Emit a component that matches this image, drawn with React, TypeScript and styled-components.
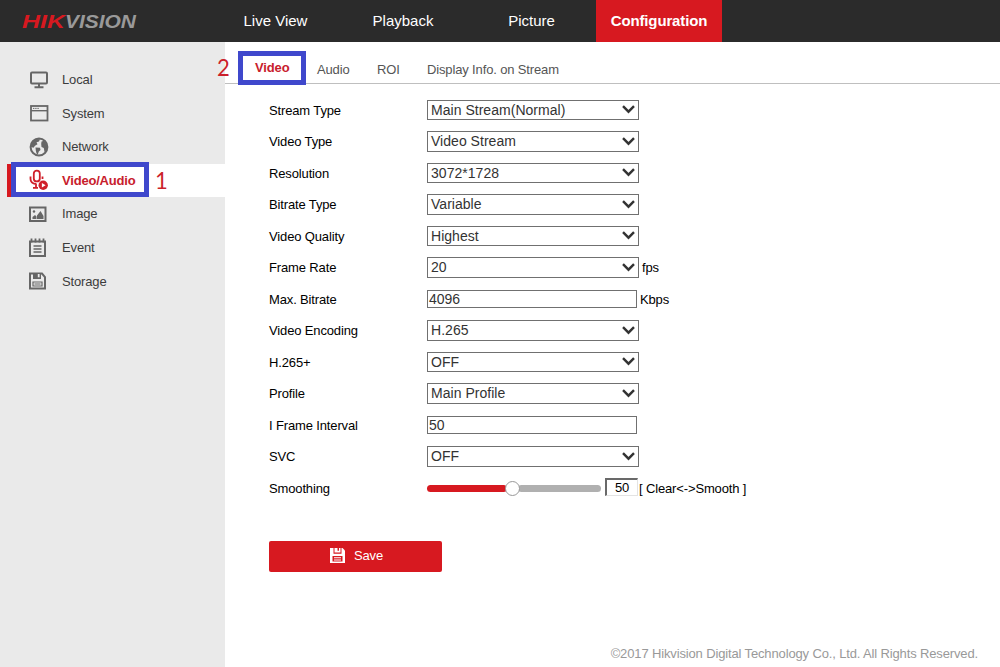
import React, { FunctionComponent, ReactNode } from 'react';
import styled, { createGlobalStyle } from 'styled-components';

type FieldProps = {
  label: string;
  value: string;
  kind?: 'select' | 'input';
  unit?: string;
};

const GlobalStyle = createGlobalStyle`
  * {
    box-sizing: border-box;
  }

  body {
    margin: 0;
    background: #fff;
    font-family: 'Liberation Sans', Arial, sans-serif;
    font-size: 13px;
    letter-spacing: -0.14px;
    color: #000;
  }
`;

const Page = styled.div`
  display: flex;
  flex-direction: column;
  width: 1000px;
  height: 667px;
  overflow: hidden;
  white-space: nowrap;
`;

const Header = styled.header`
  display: flex;
  flex: none;
  height: 42px;
  background: #2b2b2b;
`;

const LogoArea = styled.div`
  width: 212px;
  padding: 12px 0 0 20px;
  letter-spacing: 0;
`;

const MainNav = styled.nav`
  display: flex;
`;

const NavItem = styled.a<{ $width: number; $active?: boolean }>`
  display: flex;
  justify-content: center;
  width: ${p => p.$width}px;
  line-height: 41px;
  font-size: 15px;
  letter-spacing: ${p => (p.$active ? '-0.14px' : 0)};
  color: #fff;
  font-weight: ${p => (p.$active ? 'bold' : 'normal')};
  background: ${p => (p.$active ? '#d71920' : 'transparent')};
`;

const Body = styled.div`
  display: flex;
  flex: 1;
  min-height: 0;
`;

const Sidebar = styled.aside`
  width: 225px;
  padding-top: 21px;
  background: #eaeaea;
`;

const SideItem = styled.a<{ $active?: boolean }>`
  position: relative;
  display: flex;
  align-items: center;
  height: 33.55px;
  margin-left: 7px;
  padding-left: 20px;
  border-left: 1px solid ${p => (p.$active ? '#d71920' : 'transparent')};
  box-shadow: ${p => (p.$active ? 'inset 5px 0 #d71920' : 'none')};
  background: ${p => (p.$active ? '#fff' : 'transparent')};
  color: ${p => (p.$active ? '#c8202c' : '#3c3c3c')};
  font-weight: ${p => (p.$active ? 'bold' : 'normal')};
  letter-spacing: ${p => (p.$active ? -0.2 : -0.14)}px;

  svg {
    flex: none;
    margin-right: 12px;
  }
`;

const Content = styled.main`
  display: flex;
  flex: 1;
  flex-direction: column;
`;

const Tabs = styled.div`
  display: flex;
  flex: none;
  height: 42px;
  padding-left: 13px;
  border-bottom: 1px solid #bfbfbf;
  color: #555;
`;

const Tab = styled.a<{ $width: number; $active?: boolean }>`
  position: relative;
  width: ${p => p.$width}px;
  padding-left: ${p => (p.$active ? 17 : 0)}px;
  line-height: ${p => (p.$active ? 52 : 56)}px;
  font-weight: ${p => (p.$active ? 'bold' : 'normal')};
  color: ${p => (p.$active ? '#c8202c' : 'inherit')};
`;

const Highlight = styled.span<{ $left: number; $top: number; $width: number; $height: number }>`
  position: absolute;
  left: ${p => p.$left}px;
  top: ${p => p.$top}px;
  width: ${p => p.$width}px;
  height: ${p => p.$height}px;
  border: 5px solid #3f48cc;
`;

const StepNumber = styled.span<{ $left: number; $top: number }>`
  position: absolute;
  left: ${p => p.$left}px;
  top: ${p => p.$top}px;
  font: 24px/24px Lato, 'Open Sans', sans-serif;
  color: #cc1f2b;
  transform: scaleX(0.92);
  transform-origin: left;
`;

const Form = styled.form`
  display: flex;
  flex-direction: column;
  padding: 10.25px 0 0 44px;
`;

const Row = styled.div`
  display: flex;
  align-items: center;
  height: 31.5px;
`;

const Label = styled.label`
  width: 158px;
`;

const SelectBox = styled.div`
  display: flex;
  align-items: center;
  justify-content: space-between;
  width: 212px;
  height: 20.5px;
  padding: 0 3px 0.8px;
  border: 1px solid #707070;
  font-size: 14px;
  letter-spacing: 0.03px;
  color: #333;
`;

const InputBox = styled.div`
  width: 210px;
  height: 18px;
  padding-left: 1px;
  border: 1px solid #707070;
  font-size: 14px;
  line-height: 17px;
  letter-spacing: 0;
  color: #333;
`;

const Unit = styled.span`
  margin-left: 3px;
`;

const Slider = styled.div`
  display: flex;
  align-items: center;
  width: 174px;
  height: 16px;
`;

const Track = styled.span<{ $color: string; $width?: number }>`
  flex: ${p => (p.$width ? `0 0 ${p.$width}px` : 1)};
  height: 7px;
  border-radius: 4px;
  background: ${p => p.$color};
`;

const Knob = styled.span`
  width: 15px;
  height: 15px;
  margin: 0 -2px;
  border: 1px solid #999;
  border-radius: 50%;
  background: #fff;
  z-index: 1;
`;

const SliderValue = styled.div`
  width: 33px;
  height: 18px;
  margin: -2px 1px 0 4px;
  border: 1px solid #e3e3e3;
  border-top: 2px solid #696969;
  border-left: 2px solid #696969;
  line-height: 16px;
  text-align: center;
`;

const SaveButton = styled.button`
  display: flex;
  align-items: center;
  gap: 9px;
  width: 173px;
  height: 31px;
  margin-top: 37.25px;
  padding: 0 0 2px 61px;
  border: 0;
  border-radius: 2px;
  background: #d71920;
  color: #fff;
  font: inherit;
  letter-spacing: inherit;
`;

const Footer = styled.footer`
  margin-top: auto;
  padding: 0 22px 6px 0;
  text-align: right;
  color: #999;
`;

const Logo = () => (
  <svg width="120" height="20" fontFamily="Liberation Sans, sans-serif" fontSize="19" fontStyle="italic" fontWeight="bold">
    <text x="2" y="16" textLength="43" lengthAdjust="spacingAndGlyphs" fill="#d71920">
      HIK
    </text>
    <text x="45" y="16" textLength="71" lengthAdjust="spacingAndGlyphs" fill="#999">
      VISION
    </text>
  </svg>
);

const SideIcon: FunctionComponent<{ children: ReactNode; shift?: number }> = ({ children, shift = 0 }) => (
  <svg width="22" height="22" viewBox={`${shift} 0 22 22`} fill="none" stroke="#666" strokeWidth="2">
    {children}
  </svg>
);

const LocalIcon = () => (
  <SideIcon>
    <rect x="3" y="3.5" width="16" height="11" rx="1" />
    <path d="M11 15v3M6.5 18.2h9" />
  </SideIcon>
);

const SystemIcon = () => (
  <SideIcon>
    <rect x="3" y="4" width="16.5" height="14.5" strokeWidth="1.8" />
    <path d="M3 8.7h16.5" strokeWidth="1.4" />
    <path d="M5 6.4h6" strokeWidth="1" strokeDasharray="1.4 .8" />
  </SideIcon>
);

const NetworkIcon = () => (
  <SideIcon shift={1}>
    <circle cx="12" cy="11" r="8.4" />
    <path
      d="M4 11l.5-5 4.5-3 4 .3-1 2.2-2.500.7 1 2-2.5 1.5-1.5 2zM8.5 11.5l4.5.2.5 2.3-1.700 1.500-1 3-1.3-1-.7-3zM14.5 5.500l2.500-.8 3 4v5l-2.500 2.300-.7-4-2.300-1-.3-3z"
      fill="#666"
      stroke="none"
    />
  </SideIcon>
);

const VideoAudioIcon = () => (
  <svg width="22" height="22" viewBox="1 0 22 22" fill="none" stroke="#d0202a" strokeWidth="1.8">
    <rect x="6.8" y="1.6" width="6" height="10.8" rx="3" />
    <path d="M3.5 7.5v2.2c0 3.2 2.2 5 5.5 5.3M15.5 7.5V10M9 14.5V19M6 18.8h5" />
    <circle cx="16.2" cy="16.2" r="4.7" fill="#d0202a" stroke="none" />
    <path d="M14.9 13.9l3.7 2.3-3.7 2.3z" fill="#fff" stroke="none" />
  </svg>
);

const ImageIcon = () => (
  <SideIcon shift={1}>
    <rect x="3" y="4.5" width="15.5" height="13.5" />
    <path d="M5.5 16v-2L8 12l1.5 1.5V16zM10 16v-3.5L13.5 8l3 5v3z" fill="#666" stroke="none" />
    <circle cx="7" cy="8.5" r="1.2" fill="#666" stroke="none" />
  </SideIcon>
);

const EventIcon = () => (
  <SideIcon shift={1}>
    <path d="M3 4.5h15V19H3z" />
    <path d="M4.5 1.5v4M8.5 1.5v4M12.5 1.5v4M16.5 1.5v4" strokeWidth="1.8" />
    <path d="M6.5 9h8M6.5 12h8M6.5 15h8" strokeWidth="1.3" />
  </SideIcon>
);

const StorageIcon = () => (
  <SideIcon shift={1}>
    <path d="M3 3.5h12L18 7v11.5H3z" />
    <path d="M6 3h8v6H6z" fill="#666" stroke="none" />
    <path d="M10.8 4h1.8v3.3h-1.8z" fill="#eaeaea" stroke="none" />
    <path d="M6 12h9v4H6zM7.5 14h6" strokeWidth="1.2" />
  </SideIcon>
);

const SaveIcon = () => (
  <svg width="15" height="15" viewBox="0 0 15 15">
    <path d="M0 0h12.5L15 2.5V15H0z" fill="#fff" />
    <path d="M3.5 0h1v4.5h6V0h1v5.7h-8zM7.5 0H9v2.8H7.5zM2.5 8h10v5.5h-10z" fill="#d71920" />
    <path d="M4 9.3h7v1H4zM4 11.5h7v1H4z" fill="#fff" />
  </svg>
);

const Chevron = () => (
  <svg width="13" height="9" viewBox="0 0 13 9" fill="none" stroke="#333" strokeWidth="2.4">
    <path d="M1 1.2l5.5 5.5L12 1.2" />
  </svg>
);

const fields: FieldProps[] = [
  { label: 'Stream Type', value: 'Main Stream(Normal)' },
  { label: 'Video Type', value: 'Video Stream' },
  { label: 'Resolution', value: '3072*1728' },
  { label: 'Bitrate Type', value: 'Variable' },
  { label: 'Video Quality', value: 'Highest' },
  { label: 'Frame Rate', value: '20', unit: 'fps' },
  { label: 'Max. Bitrate', value: '4096', kind: 'input', unit: 'Kbps' },
  { label: 'Video Encoding', value: 'H.265' },
  { label: 'H.265+', value: 'OFF' },
  { label: 'Profile', value: 'Main Profile' },
  { label: 'I Frame Interval', value: '50', kind: 'input' },
  { label: 'SVC', value: 'OFF' },
];

const Field: FunctionComponent<FieldProps> = ({ label, value, kind = 'select', unit }) => (
  <Row>
    <Label>{label}</Label>
    {kind === 'select' ? (
      <SelectBox>
        {value}
        <Chevron />
      </SelectBox>
    ) : (
      <InputBox>{value}</InputBox>
    )}
    {unit && <Unit>{unit}</Unit>}
  </Row>
);

const App: FunctionComponent = () => (
  <Page>
    <GlobalStyle />
    <Header>
      <LogoArea>
        <Logo />
      </LogoArea>
      <MainNav>
        <NavItem $width={127}>Live View</NavItem>
        <NavItem $width={128}>Playback</NavItem>
        <NavItem $width={129}>Picture</NavItem>
        <NavItem $width={126} $active>
          Configuration
        </NavItem>
      </MainNav>
    </Header>
    <Body>
      <Sidebar>
        <SideItem>
          <LocalIcon />
          Local
        </SideItem>
        <SideItem>
          <SystemIcon />
          System
        </SideItem>
        <SideItem>
          <NetworkIcon />
          Network
        </SideItem>
        <SideItem $active>
          <VideoAudioIcon />
          Video/Audio
          <Highlight $left={3} $top={-2} $width={138} $height={35} />
          <StepNumber $left={147} $top={4}>
            1
          </StepNumber>
        </SideItem>
        <SideItem>
          <ImageIcon />
          Image
        </SideItem>
        <SideItem>
          <EventIcon />
          Event
        </SideItem>
        <SideItem>
          <StorageIcon />
          Storage
        </SideItem>
      </Sidebar>
      <Content>
        <Tabs>
          <Tab $width={79} $active>
            Video
            <Highlight $left={0} $top={9} $width={68} $height={34} />
            <StepNumber $left={-21} $top={13}>
              2
            </StepNumber>
          </Tab>
          <Tab $width={60}>Audio</Tab>
          <Tab $width={50}>ROI</Tab>
          <Tab $width={140}>Display Info. on Stream</Tab>
        </Tabs>
        <Form>
          {fields.map(field => (
            <Field key={field.label} {...field} />
          ))}
          <Row>
            <Label>Smoothing</Label>
            <Slider>
              <Track $color="#d71920" $width={80} />
              <Knob />
              <Track $color="#b0b0b0" />
            </Slider>
            <SliderValue>50</SliderValue>
            [ Clear&lt;-&gt;Smooth ]
          </Row>
          <SaveButton type="button">
            <SaveIcon />
            Save
          </SaveButton>
        </Form>
        <Footer>©2017 Hikvision Digital Technology Co., Ltd. All Rights Reserved.</Footer>
      </Content>
    </Body>
  </Page>
);

export default App;
